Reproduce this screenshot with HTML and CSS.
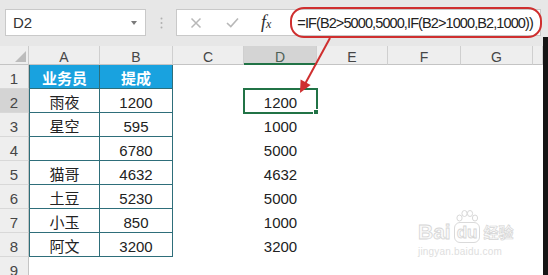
FILE: index.html
```html
<!DOCTYPE html>
<html lang="zh-CN">
<head>
<meta charset="utf-8">
<title>Excel IF</title>
<link rel="stylesheet" href="styles.css">
</head>
<body>
<div class="app">
  <div class="toolbar">
    <div class="namebox">
      <span class="nb-text">D2</span>
      <svg class="nb-arrow" width="6" height="4" viewBox="0 0 6 4"><path d="M0 0H6L3 4Z" fill="#7a7a7a"/></svg>
    </div>
    <svg class="grip" width="3" height="12" viewBox="0 0 3 12">
      <circle cx="1.5" cy="1.5" r="1" fill="#b0b0b0"/>
      <circle cx="1.5" cy="6" r="1" fill="#b0b0b0"/>
      <circle cx="1.5" cy="10.5" r="1" fill="#b0b0b0"/>
    </svg>
    <div class="fbar">
      <svg class="ico-x" width="12" height="12" viewBox="0 0 12 12"><path d="M1.5 1.5L10.5 10.5M10.5 1.5L1.5 10.5" stroke="#b8b8b8" stroke-width="1.5" fill="none"/></svg>
      <svg class="ico-ok" width="13" height="11" viewBox="0 0 13 11"><path d="M1 6L4.8 9.6L12 1.5" stroke="#b8b8b8" stroke-width="1.6" fill="none"/></svg>
      <span class="fx">f<span class="fx-x">x</span></span>
      <div class="formula">=IF(B2&gt;5000,5000,IF(B2&gt;1000,B2,1000))</div>
    </div>
  </div>
  <div class="main">
    <div class="sheetwrap">
      <div class="grid">
        <div class="corner"><svg width="11" height="11" viewBox="0 0 11 11"><path d="M11 0V11H0Z" fill="#bcbcbc"/></svg></div>
        <div class="ch">A</div><div class="ch">B</div><div class="ch">C</div><div class="ch sel">D</div><div class="ch">E</div><div class="ch">F</div><div class="ch">G</div><div class="ch"></div>

        <div class="rh">1</div><div class="c t tl th">业务员</div><div class="c t th">提成</div><div class="c"></div><div class="c"></div><div class="c"></div><div class="c"></div><div class="c"></div><div class="c"></div>

        <div class="rh sel">2</div><div class="c t tl">雨夜</div><div class="c t">1200</div><div class="c"></div><div class="c cur">1200<span class="selbox"></span><span class="handle"></span></div><div class="c"></div><div class="c"></div><div class="c"></div><div class="c"></div>

        <div class="rh">3</div><div class="c t tl">星空</div><div class="c t">595</div><div class="c"></div><div class="c">1000</div><div class="c"></div><div class="c"></div><div class="c"></div><div class="c"></div>

        <div class="rh">4</div><div class="c t tl"></div><div class="c t">6780</div><div class="c"></div><div class="c">5000</div><div class="c"></div><div class="c"></div><div class="c"></div><div class="c"></div>

        <div class="rh">5</div><div class="c t tl">猫哥</div><div class="c t">4632</div><div class="c"></div><div class="c">4632</div><div class="c"></div><div class="c"></div><div class="c"></div><div class="c"></div>

        <div class="rh">6</div><div class="c t tl">土豆</div><div class="c t">5230</div><div class="c"></div><div class="c">5000</div><div class="c"></div><div class="c"></div><div class="c"></div><div class="c"></div>

        <div class="rh">7</div><div class="c t tl">小玉</div><div class="c t">850</div><div class="c"></div><div class="c">1000</div><div class="c"></div><div class="c"></div><div class="c"></div><div class="c"></div>

        <div class="rh">8</div><div class="c t tl">阿文</div><div class="c t">3200</div><div class="c"></div><div class="c">3200</div><div class="c"></div><div class="c"></div><div class="c"></div><div class="c"></div>

        <div class="rh">9</div><div class="c"></div><div class="c"></div><div class="c"></div><div class="c"></div><div class="c"></div><div class="c"></div><div class="c"></div><div class="c"></div>
      </div>
    </div>
    <div class="edge"></div>
  </div>

  <div class="oval"></div>
  <svg class="arrow" width="548" height="275" viewBox="0 0 548 275">
    <path d="M330 38L305 84" stroke="#cf2f2f" stroke-width="2" fill="none"/>
    <path d="M300 93L300.6 79.6L310.6 85Z" fill="#cf2f2f"/>
  </svg>
  <div class="wm">
    <div class="wm-logo">
      <span class="wm-bai">Bai</span>
      <span class="wm-paw">
        <svg width="22" height="12" viewBox="0 0 22 12">
          <ellipse cx="3.5" cy="8" rx="2.6" ry="3" fill="none" stroke="#d8d8d8"/>
          <ellipse cx="8.5" cy="3.5" rx="2.6" ry="3" fill="none" stroke="#d8d8d8"/>
          <ellipse cx="14" cy="3.5" rx="2.6" ry="3" fill="none" stroke="#d8d8d8"/>
          <ellipse cx="19" cy="8" rx="2.6" ry="3" fill="none" stroke="#d8d8d8"/>
        </svg>
        <span class="wm-du">du</span>
      </span>
      <span class="wm-jy">经验</span>
    </div>
    <div class="wm-url">jingyan.baidu.com</div>
  </div>
</div>
</body>
</html>
```

FILE: styles.css
```css
html, body {
  margin: 0;
  padding: 0;
  overflow: hidden;
  background: #ffffff;
}

.app {
  position: relative;
  width: 548px;
  height: 275px;
  overflow: hidden;
  font-family: "Liberation Sans", "Noto Sans CJK SC", sans-serif;
  color: #222;
}

/* ---------- toolbar ---------- */
.toolbar {
  box-sizing: border-box;
  height: 37px;
  padding: 9px 0 0 5px;
  background: #e7e7e7;
  display: flex;
  align-items: flex-start;
}

.namebox {
  box-sizing: border-box;
  width: 141px;
  height: 27px;
  background: #fff;
  border: 1px solid #c9c9c9;
  display: flex;
  align-items: center;
  padding: 0 8px 0 7px;
}

.nb-text {
  flex: 1;
  font-size: 15px;
  color: #333;
}

.grip {
  margin: 8px 0 0 14px;
}

.fbar {
  box-sizing: border-box;
  width: 365px;
  height: 27px;
  margin-left: 13px;
  background: #fff;
  border: 1px solid #c9c9c9;
  display: flex;
  align-items: center;
}

.ico-x {
  margin-left: 13px;
}

.ico-ok {
  margin-left: 24px;
}

.fx {
  margin-left: 22px;
  font-family: "Liberation Serif", serif;
  font-style: italic;
  font-size: 18px;
  color: #2e2e2e;
}

.fx-x {
  font-size: 12px;
}

.formula {
  margin-left: 26px;
  font-size: 14.5px;
  letter-spacing: -0.9px;
  color: #222;
  white-space: nowrap;
}

/* ---------- sheet ---------- */
.main {
  display: flex;
}

.sheetwrap {
  width: 543px;
  padding-top: 9px;
  background: #e7e7e7;
}

.edge {
  width: 5px;
  background: #151515;
}

.grid {
  display: grid;
  grid-template-columns: 29px 71px 73px 71px 73px 71px 73px 72px 10px;
  grid-template-rows: 19px repeat(9, 24px);
  background: #fff;
}

.grid > div {
  box-sizing: border-box;
}

.corner {
  background: #eeeeee;
  border-right: 1px solid #cbcbcb;
  border-bottom: 1px solid #c4c4c4;
  display: flex;
  justify-content: flex-end;
  align-items: flex-end;
  padding: 0 2px 2px 0;
}

.ch {
  background: #eeeeee;
  border-right: 1px solid #cfcfcf;
  border-bottom: 1px solid #c4c4c4;
  font-size: 14px;
  line-height: 12px;
  color: #464646;
  display: flex;
  justify-content: center;
  align-items: flex-end;
  padding-bottom: 1px;
}

.ch.sel {
  background: #d4d4d4;
  border-bottom: 2px solid #217346;
  padding-bottom: 0;
  color: #4d5f55;
}

.rh {
  background: #eeeeee;
  border-right: 1px solid #c4c4c4;
  border-bottom: 1px solid #d8d8d8;
  font-size: 15px;
  line-height: 17px;
  color: #464646;
  display: flex;
  justify-content: center;
  align-items: flex-end;
  padding-bottom: 1px;
}

.rh.sel {
  background: #d4d4d4;
}

.c {
  font-size: 15px;
  line-height: 17px;
  display: flex;
  justify-content: center;
  align-items: flex-end;
  padding-bottom: 2px;
  white-space: nowrap;
}

.t {
  border-right: 1px solid #2e6e7a;
  border-bottom: 1px solid #2e6e7a;
  padding-bottom: 1px;
}

.tl {
  border-left: 1px solid #2e6e7a;
}

.th {
  background: #19a2df;
  color: #fff;
  font-weight: 700;
  font-family: "Noto Sans CJK SC", sans-serif;
  line-height: 19px;
  padding-bottom: 1px;
}

.cur {
  position: relative;
}

.selbox {
  position: absolute;
  top: -1px;
  left: -1px;
  right: -1px;
  bottom: -1px;
  border: 2px solid #217346;
}

.handle {
  position: absolute;
  right: -2px;
  bottom: -2px;
  width: 4px;
  height: 4px;
  background: #217346;
  border: 1px solid #fff;
}

/* ---------- overlays ---------- */
.oval {
  position: absolute;
  left: 290px;
  top: 7px;
  width: 252px;
  height: 31px;
  box-sizing: border-box;
  border: 2px solid #cf2f2f;
  border-radius: 14px;
}

.arrow {
  position: absolute;
  left: 0;
  top: 0;
}

.wm {
  position: absolute;
  left: 418px;
  top: 210px;
  width: 100px;
  color: #fafafa;
}

.wm-logo {
  display: flex;
  align-items: flex-end;
  height: 33px;
}

.wm-bai {
  font-family: "Liberation Sans", sans-serif;
  font-weight: 700;
  font-size: 21px;
  line-height: 22px;
  -webkit-text-stroke: 0.8px #d6d6d6;
}

.wm-paw {
  display: flex;
  flex-direction: column;
  align-items: center;
  margin-left: 3px;
}

.wm-du {
  font-family: "Liberation Sans", sans-serif;
  font-weight: 700;
  font-size: 17px;
  line-height: 19px;
  padding: 0 2px;
  border: 1px solid #dadada;
  border-radius: 6px;
  -webkit-text-stroke: 0.8px #d6d6d6;
}

.wm-jy {
  font-family: "Noto Sans CJK SC", sans-serif;
  font-weight: 700;
  font-size: 15px;
  line-height: 22px;
  margin-left: 3px;
  -webkit-text-stroke: 0.7px #d6d6d6;
}

.wm-url {
  font-size: 10px;
  line-height: 12px;
  margin-top: 3px;
  color: #dedede;
  letter-spacing: 0.2px;
}
```
